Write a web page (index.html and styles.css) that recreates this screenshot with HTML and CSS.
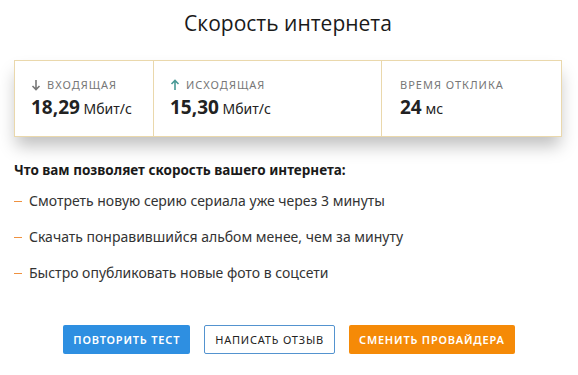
FILE: index.html
```html
<!DOCTYPE html>
<html lang="ru">
<head>
    <meta charset="UTF-8">
    <meta name="viewport" content="width=device-width, initial-scale=1.0">
    <title>Скорость интернета</title>
    <link rel="stylesheet" href="styles.css">
</head>
<body>
    <div id="page">
        <h1 class="title">Скорость интернета</h1>

        <div class="stats">
            <div class="stat">
                <div class="label">
                    <svg class="arrow" viewBox="0 0 10 12" width="10" height="12"><path d="M5 1v9.5M1.5 7L5 10.5 8.5 7" fill="none" stroke="#777" stroke-width="1.6"/></svg>
                    входящая
                </div>
                <div class="value"><b>18,29</b> Мбит/с</div>
            </div>
            <div class="stat">
                <div class="label">
                    <svg class="arrow" viewBox="0 0 10 12" width="10" height="12"><path d="M5 11V1.5M1.5 5L5 1.5 8.5 5" fill="none" stroke="#4a9a96" stroke-width="1.6"/></svg>
                    исходящая
                </div>
                <div class="value"><b>15,30</b> Мбит/с</div>
            </div>
            <div class="stat">
                <div class="label">время отклика</div>
                <div class="value"><b>24</b> мс</div>
            </div>
        </div>

        <h2 class="subtitle">Что вам позволяет скорость вашего интернета:</h2>
        <ul class="list">
            <li>Смотреть новую серию сериала уже через 3 минуты</li>
            <li>Скачать понравившийся альбом менее, чем за минуту</li>
            <li>Быстро опубликовать новые фото в соцсети</li>
        </ul>

        <div class="actions">
            <div class="btn btn-blue">Повторить тест</div>
            <div class="btn btn-white">Написать отзыв</div>
            <div class="btn btn-orange">Сменить провайдера</div>
        </div>
    </div>
</body>
</html>
```

FILE: styles.css
```css
*{
    margin: 0;
    padding: 0;
    box-sizing: border-box;
    font-family: "Noto Sans", "Open Sans", sans-serif;
}

body{
    background: #fff;
    color: #222;
}

#page{
    padding: 8px 16px 0 14px;
}

.title{
    font-family: "Open Sans", sans-serif;
    font-weight: 400;
    font-size: 21px;
    line-height: 30px;
    text-align: center;
    color: #1a1a1a;
    margin-bottom: 22px;
}

.stats{
    display: grid;
    grid-template-columns: 138px 228px 1fr;
    height: 77px;
    border: 1px solid #ead8ac;
    box-shadow: 0 11px 16px -2px rgba(0, 0, 0, 0.25);
}
.stat{
    padding: 16px 16px 0 16px;
    border-left: 1px solid #ead8ac;
}
.stat:first-child{
    border-left: none;
}
.stat:last-child{
    padding-left: 18px;
}
.label{
    display: flex;
    align-items: center;
    gap: 6px;
    font-size: 11px;
    line-height: 16px;
    letter-spacing: 1px;
    text-transform: uppercase;
    color: #777;
}
.arrow{
    margin-left: 0;
}
.value{
    font-size: 14px;
    line-height: 24px;
    margin-top: 2px;
    color: #222;
}
.value b{
    font-size: 19px;
    font-weight: 700;
}

.subtitle{
    font-size: 13.5px;
    font-weight: 700;
    line-height: 20px;
    margin-top: 23px;
    color: #1a1a1a;
}

.list{
    list-style: none;
    margin-top: 11px;
}
.list li{
    display: flex;
    align-items: center;
    font-size: 14px;
    line-height: 20px;
    margin-bottom: 16px;
    color: #333;
}
.list li::before{
    content: "";
    width: 8px;
    height: 1px;
    background: #ef9140;
    margin-right: 7px;
}

.actions{
    display: flex;
    justify-content: center;
    gap: 14px;
    margin-top: 42px;
    padding-left: 2px;
}
.btn{
    height: 29px;
    padding: 0 10px;
    display: flex;
    align-items: center;
    font-size: 11px;
    letter-spacing: 0.8px;
    text-transform: uppercase;
    border-radius: 2px;
    cursor: pointer;
}
.btn-blue{
    background: #2e8fe1;
    color: #fff;
    font-weight: 600;
}
.btn-white{
    background: #fff;
    border: 1px solid #5393cf;
    color: #222;
}
.btn-orange{
    background: #f58a07;
    color: #fff;
    font-weight: 600;
}
```
